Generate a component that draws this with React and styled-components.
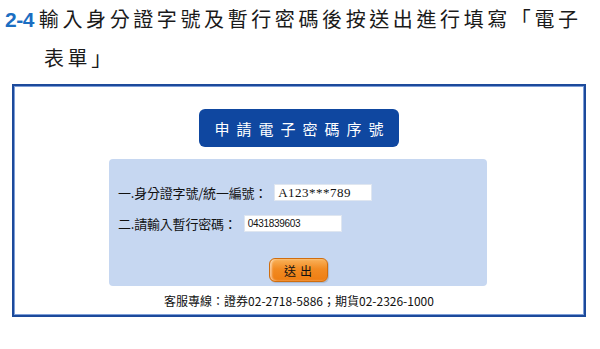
import React from "react";
import styled, { createGlobalStyle } from "styled-components";

const Global = createGlobalStyle`
  html, body { margin: 0; padding: 0; background: #ffffff; }
  body { font-family: "Noto Sans CJK TC", "Noto Sans", sans-serif; color: #222; }
`;

const Page = styled.div`
  width: 600px;
  height: 349px;
  box-sizing: border-box;
  overflow: hidden;
`;

const Heading = styled.h2`
  margin: 0;
  font-weight: 400;
  font-size: 20px;
  line-height: 38px;
  color: #1a1a1a;
  letter-spacing: 3.6px;
  font-family: "Noto Sans CJK TC", sans-serif;
`;

const Line = styled.div`
  display: flex;
  align-items: baseline;
  padding-left: ${(p) => p.$indent}px;
  white-space: nowrap;
`;

const Num = styled.span`
  font-family: "Liberation Sans", Arial, sans-serif;
  font-weight: 700;
  font-size: 21px;
  letter-spacing: -0.5px;
  color: #1b6ec2;
  margin-right: 5px;
`;

const Frame = styled.section`
  margin: 7px 0 0 12px;
  width: 574px;
  height: 233px;
  box-sizing: border-box;
  border: 2px solid #1c4a9b;
  box-shadow: inset 0 0 0 1px #7d9ed8;
  display: flex;
  flex-direction: column;
  align-items: center;
  padding-top: 23px;
`;

const Banner = styled.div`
  width: 200px;
  height: 38px;
  border-radius: 6px;
  background: #0f47a0;
  color: #ffffff;
  display: flex;
  align-items: center;
  justify-content: center;
  font-size: 15px;
  letter-spacing: 7px;
  padding-left: 7px;
  box-sizing: border-box;
  font-family: "Noto Sans CJK TC", sans-serif;
`;

const Panel = styled.div`
  margin-top: 12px;
  width: 378px;
  height: 127px;
  box-sizing: border-box;
  margin-right: 2px;
  background: #c6d7f1;
  border-radius: 4px;
  padding: 24px 0 0 9px;
  display: flex;
  flex-direction: column;
`;

const Row = styled.div`
  display: flex;
  align-items: center;
  gap: 7px;
  margin-bottom: ${(p) => p.$mb}px;
  font-size: 13px;
  color: #111;
  font-family: "Noto Sans CJK TC", sans-serif;
`;

const Label = styled.span`
  white-space: nowrap;
  letter-spacing: -0.2px;
`;

const Field = styled.div`
  width: 98px;
  height: ${(p) => p.$h}px;
  box-sizing: border-box;
  background: #ffffff;
  border: 1px solid #dfe6f0;
  display: flex;
  align-items: center;
  padding-left: 3px;
  font-family: ${(p) => (p.$serif ? '"Liberation Serif", serif' : '"Liberation Sans", sans-serif')};
  font-size: ${(p) => p.$fs}px;
  letter-spacing: ${(p) => p.$ls}px;
  color: #111;
`;

const ButtonRow = styled.div`
  display: flex;
  justify-content: center;
  padding-right: 9px;
`;

const Submit = styled.button`
  width: 59px;
  height: 24px;
  border-radius: 6px;
  border: 1px solid #d06d0e;
  background: linear-gradient(#f9b25a 0%, #f28b22 45%, #ee7d12 100%);
  box-shadow: inset 2px 0 2px rgba(255,255,255,0.5), 1px 1px 1px rgba(0,0,0,0.15);
  font-family: "Noto Sans CJK TC", sans-serif;
  font-size: 12px;
  letter-spacing: 4px;
  padding: 0 0 0 4px;
  color: #111;
  cursor: pointer;
`;

const Footer = styled.div`
  margin-top: 7px;
  font-size: 12px;
  line-height: 16px;
  letter-spacing: 0;
  color: #111;
  font-family: "Noto Sans CJK TC", sans-serif;
`;

export default function App() {
  return (
    <>
      <Global />
      <Page>
        <Heading>
          <Line $indent={5}>
            <Num>2-4</Num>
            <span>輸入身分證字號及暫行密碼後按送出進行填寫「電子</span>
          </Line>
          <Line $indent={44}>
            <span>表單」</span>
          </Line>
        </Heading>
        <Frame>
          <Banner>申請電子密碼序號</Banner>
          <Panel>
            <Row $mb={12}>
              <Label>一.身分證字號/統一編號：</Label>
              <Field $h={17} $serif $fs={13} $ls={0.5}>A123***789</Field>
            </Row>
            <Row $mb={25}>
              <Label>二.請輸入暫行密碼：</Label>
              <Field $h={17} $fs={10} $ls={-0.3}>0431839603</Field>
            </Row>
            <ButtonRow>
              <Submit type="button">送出</Submit>
            </ButtonRow>
          </Panel>
          <Footer>客服專線：證券02-2718-5886；期貨02-2326-1000</Footer>
        </Frame>
      </Page>
    </>
  );
}
